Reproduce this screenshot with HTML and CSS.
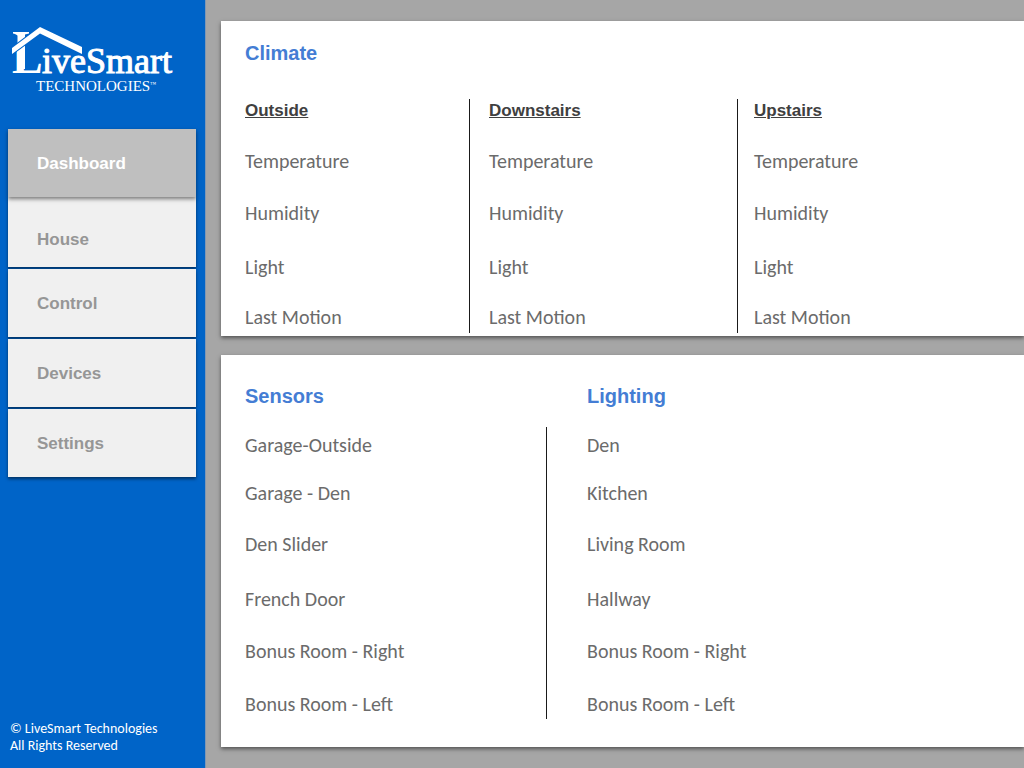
FILE: index.html
```html
<!DOCTYPE html>
<html lang="en">
<head>
<meta charset="utf-8">
<title>LiveSmart Technologies</title>
<link rel="stylesheet" href="styles.css">
</head>
<body>
<div class="app">
  <aside class="sidebar">
    <svg class="logo" width="168" height="72" viewBox="8 24 168 72" role="img" aria-label="LiveSmart Technologies">
      <clipPath id="below-roof"><rect x="8" y="50" width="40" height="30"/></clipPath>
      <path class="logo-shape" d="M13 32H29V33.500L25 34.500V69H17.500V36Q17.500 34.500 13 33.500Z"/>
      <text class="logo-initial" x="12" y="73" clip-path="url(#below-roof)">L</text>
      <text class="logo-name" x="42" y="73">iveSmart</text>
      <path class="logo-roof" d="M40 27L82 47V54L40 33.500L12 54V48Z"/>
      <text class="logo-sub" x="36" y="91">TECHNOLOGIES</text>
      <text class="logo-tm" x="150" y="86">™</text>
    </svg>
    <nav class="nav">
      <a class="nav-item active" href="#">Dashboard</a>
      <a class="nav-item" href="#">House</a>
      <a class="nav-item" href="#">Control</a>
      <a class="nav-item" href="#">Devices</a>
      <a class="nav-item" href="#">Settings</a>
    </nav>
    <footer class="copyright">© LiveSmart Technologies<br>All Rights Reserved</footer>
  </aside>
  <main class="content">
    <section class="panel">
      <h2 class="panel-title">Climate</h2>
      <div class="climate">
        <div class="zone">
          <h3 class="zone-title">Outside</h3>
          <ul class="readings"><li>Temperature</li><li>Humidity</li><li>Light</li><li>Last Motion</li></ul>
        </div>
        <div class="zone">
          <h3 class="zone-title">Downstairs</h3>
          <ul class="readings"><li>Temperature</li><li>Humidity</li><li>Light</li><li>Last Motion</li></ul>
        </div>
        <div class="zone">
          <h3 class="zone-title">Upstairs</h3>
          <ul class="readings"><li>Temperature</li><li>Humidity</li><li>Light</li><li>Last Motion</li></ul>
        </div>
      </div>
    </section>
    <section class="panel panel-split">
      <div class="group">
        <h2 class="panel-title">Sensors</h2>
        <ul class="rooms"><li>Garage-Outside</li><li>Garage - Den</li><li>Den Slider</li><li>French Door</li><li>Bonus Room - Right</li><li>Bonus Room - Left</li></ul>
      </div>
      <div class="group">
        <h2 class="panel-title">Lighting</h2>
        <ul class="rooms"><li>Den</li><li>Kitchen</li><li>Living Room</li><li>Hallway</li><li>Bonus Room - Right</li><li>Bonus Room - Left</li></ul>
      </div>
    </section>
  </main>
</div>
</body>
</html>
```
FILE: styles.css
```css
* { box-sizing: border-box; }

body {
  margin: 0;
  background: #a6a6a6;
  color: #6b6b6b;
  font: 20px/24px Carlito, Lato, sans-serif;
}

h2, h3, ul { margin: 0; padding: 0; }
ul { list-style: none; }

.app { display: flex; min-height: 100vh; }

.sidebar {
  flex: none;
  display: flex;
  flex-direction: column;
  width: 206px;
  padding: 24px 9px 14px 8px;
  border-right: 1px solid #7f97b5;
  background: #0064c8;
}

.logo { display: block; margin-bottom: 33px; fill: #fff; font-family: "Liberation Serif", serif; }
.logo-initial { font-size: 46px; font-weight: bold; }
.logo-name { font-size: 36px; stroke: #fff; stroke-width: 1; }
.logo-roof { stroke: #0064c8; stroke-width: 2; paint-order: stroke; }
.logo-sub { font-size: 15px; }
.logo-tm { font-size: 6px; }

.nav { display: flex; flex-direction: column; gap: 2px; }

.nav-item {
  display: flex;
  align-items: center;
  height: 68px;
  padding: 2px 0 0 29px;
  background: #f0f0f0;
  box-shadow: 0 2px 3px rgba(0, 0, 0, 0.5);
  color: #969696;
  font: bold 17px/20px "Liberation Sans", sans-serif;
  text-decoration: none;
}

.nav-item.active {
  position: relative;
  background: #bfbfbf;
  box-shadow: 0 2px 4px rgba(0, 0, 0, 0.5);
  color: #fff;
}

/* The item below the raised tab reaches up to meet it. */
.nav-item.active + .nav-item { height: 70px; margin-top: -2px; padding-top: 16px; }

.copyright { margin-top: auto; padding-left: 2px; color: #fff; font-size: 14px; line-height: 17px; }

.content {
  flex: 1;
  display: flex;
  flex-direction: column;
  gap: 19px;
  padding: 21px 0 21px 15px;
}

.panel {
  padding: 20px 0 3px 24px;
  background: #fff;
  box-shadow: 0 2px 4px rgba(0, 0, 0, 0.5);
}

.panel-title { color: #447dd4; font: bold 20px/24px "Liberation Sans", sans-serif; }

.climate { display: grid; grid-template-columns: 225fr 268fr 286fr; margin-top: 34px; }
.zone + .zone { padding-left: 19px; }
.zone:last-child { padding-left: 16px; }
.zone:not(:last-child) { border-right: 1px solid #1a1a1a; }
.zone-title { margin-bottom: 26px; color: #404040; font: bold 17px/24px "Liberation Sans", sans-serif; text-decoration: underline; }
.readings { display: grid; grid-template-rows: 52px 54px 50px 28px; }

.panel-split { display: grid; grid-template-columns: 302fr 477fr; padding: 29px 0 28px 24px; }
.rooms { display: grid; grid-template-rows: 48px 51px 55px 52px 53px 27px; margin-top: 19px; padding-top: 6px; }
.group:first-child .rooms { border-right: 1px solid #1a1a1a; }
.group + .group { padding-left: 40px; }
```
